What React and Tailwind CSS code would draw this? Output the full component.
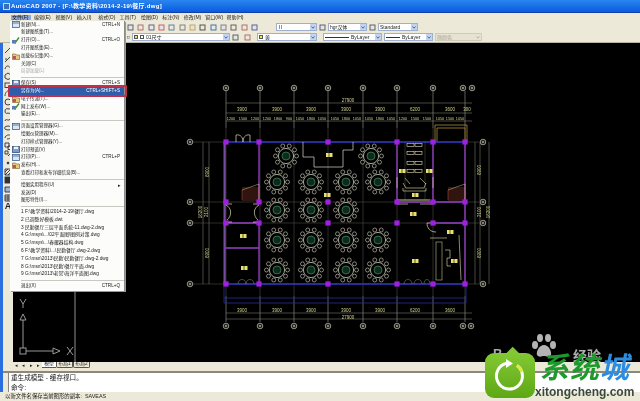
import React from "react";

const font = { fontFamily: '"Liberation Sans", "Noto Sans CJK SC", sans-serif' };

const menuBar = ["编辑(E)", "视图(V)", "插入(I)", "格式(O)", "工具(T)", "绘图(D)", "标注(N)", "修改(M)", "窗口(W)", "帮助(H)"];

const menu = [
  { t: "新建(N)...", k: "CTRL+N", i: "new" },
  { t: "新建图纸集(T)..." },
  { t: "打开(O)...", k: "CTRL+O", i: "open" },
  { t: "打开图纸集(E)..." },
  { t: "加载标记集(K)...", i: "mark" },
  { t: "关闭(C)" },
  { t: "局部加载(L)", off: true },
  { sep: true },
  { t: "保存(S)", k: "CTRL+S", i: "save" },
  { t: "另存为(A)...", k: "CTRL+SHIFT+S", on: true },
  { t: "电子传递(T)...", i: "mark" },
  { t: "网上发布(W)...", i: "open" },
  { t: "输出(E)..." },
  { sep: true },
  { t: "页面设置管理器(G)...", i: "new" },
  { t: "绘图仪管理器(M)..." },
  { t: "打印样式管理器(Y)..." },
  { t: "打印预览(V)", i: "save" },
  { t: "打印(P)...", k: "CTRL+P", i: "new" },
  { t: "发布(H)...", i: "mark" },
  { t: "查看打印和发布详细信息(B)..." },
  { sep: true },
  { t: "绘图实用程序(U)", arrow: true },
  { t: "发送(D)" },
  { t: "图形特性(I)..." },
  { sep: true },
  { t: "1 F:\\教学资料\\2014-2-19\\餐厅.dwg", f: true },
  { t: "2 已调整好模板.dwt", f: true },
  { t: "3 民勤餐厅三层平面系统-11.dwg-2.dwg", f: true },
  { t: "4 G:\\msys\\...\\02平面图\\图例对策.dwg", f: true },
  { t: "5 G:\\msys\\...\\春耀器结构.dwg", f: true },
  { t: "6 F:\\教学资料\\...\\民勤餐厅.dwg-2.dwg", f: true },
  { t: "7 G:\\msn\\2013\\民勤\\民勤餐厅.dwg-2.dwg", f: true },
  { t: "8 G:\\msn\\2013\\民勤\\餐厅平面.dwg", f: true },
  { t: "9 G:\\msn\\2013\\老常\\海洋平面图.dwg", f: true },
  { sep: true },
  { t: "退出(X)", k: "CTRL+Q" },
];

function MenuIcon({ type }) {
  if (type === "new")
    return (
      <svg width="8" height="7" viewBox="0 0 8 7">
        <rect x="0.5" y="0.5" width="7" height="6" fill="#dbe6f4" stroke="#41618f" strokeWidth="0.8" />
        <path d="M0.5 2H7.5" stroke="#41618f" strokeWidth="0.8" />
      </svg>
    );
  if (type === "open")
    return (
      <svg width="8" height="7" viewBox="0 0 8 7">
        <path d="M1 3L3 6L7 0.5" fill="none" stroke="#3c8a2e" strokeWidth="1.3" />
        <rect x="0" y="3" width="4" height="3.5" fill="#5a7fb0" />
      </svg>
    );
  if (type === "mark")
    return (
      <svg width="8" height="7" viewBox="0 0 8 7">
        <path d="M0.5 1H3.5L4.5 2H7.5V6.5H0.5Z" fill="#e8c87a" stroke="#8a6a3a" strokeWidth="0.7" />
        <rect x="1" y="3" width="3" height="3" fill="#c0506a" />
      </svg>
    );
  return (
    <svg width="8" height="7" viewBox="0 0 8 7">
      <rect x="0.5" y="0.5" width="7" height="6" fill="#7f9cc6" stroke="#37527c" strokeWidth="0.8" />
      <rect x="2" y="0.7" width="4" height="2.3" fill="#eef2f8" />
    </svg>
  );
}

const tools = [
  <path d="M1 7L7 1" />,
  <path d="M1 7L7 1M1 4H3" />,
  <path d="M1 6C2 2 5 2 7 6" />,
  <path d="M4 1L7 3V6L4 7.5L1 6V3Z" />,
  <rect x="1" y="2" width="6" height="4.5" />,
  <path d="M1 7C1 3 4 1 7 1" />,
  <circle cx="4" cy="4" r="3" />,
  <path d="M1 4C1 2 3 1 4 2C6 1 7 3 7 4C7 6 5 7 4 6C2 7 1 6 1 4Z" />,
  <path d="M1 5C2 1 4 7 7 2" />,
  <ellipse cx="4" cy="4" rx="3.4" ry="2" />,
  <path d="M1 5C1 2 6 1 7 3C7 5 5 6 3 6" />,
  <path d="M1 1H5V5H1ZM4 4H7.5V7.5H4Z" />,
  <path d="M1 1H4V4H1ZM4 6L7 3M7 3V6" />,
  <circle cx="4" cy="4" r="0.9" fill="#222" />,
  <path d="M1 1H7V7H1ZM1 4L4 1M1 7L7 1M4 7L7 4" />,
  <rect x="1" y="1" width="6" height="6" fill="#333" />,
  <path d="M1 2H7V7H1Z" fill="#9db4d2" />,
  <path d="M1 1H7V7H1ZM1 3H7M1 5H7M4 1V7" />,
];

function Combo({ w, children, gray }) {
  return (
    <div className={`flex h-[8px] items-center border ${gray ? "border-[#cfccbc] bg-[#e6e3d3] text-[#aaa79a]" : "border-[#9fb0cc] bg-white text-[#222]"}`} style={{ width: w }}>
      <div className="flex min-w-0 flex-1 items-center gap-[2px] overflow-hidden whitespace-nowrap pl-[1px] text-[5px] leading-none">{children}</div>
      <div className={`flex h-full w-[6px] items-center justify-center ${gray ? "bg-[#e6e3d3]" : "bg-[#c3d3f0]"}`}>
        <svg width="4" height="3" viewBox="0 0 4 3">
          <path d="M0.5 0.5L2 2.2L3.5 0.5" fill="none" stroke={gray ? "#aaa" : "#3a5a94"} strokeWidth="0.9" />
        </svg>
      </div>
    </div>
  );
}

const tbColors = ["#555", "#a66", "#558", "#c55", "#579", "#777", "#c8a03c", "#444", "#36a", "#777"];

function ToolIcons({ n, w }) {
  return (
    <div className="flex items-center justify-between" style={{ width: w }}>
      {Array.from({ length: n }).map((_, i) => (
        <svg key={i} width="7" height="7" viewBox="0 0 7 7">
          <rect x="1" y="1" width="5" height="5" fill={i % 3 === 0 ? "#dfe4ee" : "none"} stroke={tbColors[i % tbColors.length]} strokeWidth="0.9" />
        </svg>
      ))}
    </div>
  );
}

const colX = [226, 259, 328, 397, 433, 465];
const gridX = [226, 260, 294, 328, 363, 397, 433, 465];
const gridY = [142, 202, 223, 284];
const tables = [
  [286, 156], [371, 156],
  [277, 182], [311, 182], [346, 182], [378, 182],
  [277, 210], [311, 210], [346, 210],
  [277, 240], [311, 240], [346, 240], [378, 240],
  [277, 270], [311, 270], [346, 270], [378, 270],
];
const labels = [[329, 155], [327, 195], [402, 171], [429, 171], [415, 195], [243, 236], [244, 268], [413, 214], [450, 232], [415, 261], [454, 261]];
const topA = [[242, "3900"], [277, "3900"], [311, "3900"], [346, "3900"], [380, "3900"], [415, "6200"], [450, "3600"], [467, "300"]];
const topB = [[231, "1200"], [243, "1500"], [255, "1200"], [267, "1200"], [278, "1800"], [289, "900"], [300, "1050"], [311, "1800"], [322, "1050"], [335, "1050"], [346, "1800"], [357, "1050"], [369, "1050"], [380, "1800"], [391, "1050"], [403, "1200"], [415, "1500"], [427, "1500"], [440, "1050"], [450, "1500"], [460, "1050"]];
const stalls = [145, 153, 163, 171];

function Table({ x, y }) {
  const chairs = Array.from({ length: 10 }).map((_, i) => {
    const a = (i * Math.PI * 2) / 10;
    return [x + Math.cos(a) * 10.5, y + Math.sin(a) * 10.5];
  });
  return (
    <g>
      {chairs.map(([cx, cy], i) => (
        <circle key={i} cx={cx} cy={cy} r="2" fill="#000" stroke="#d8d8c4" strokeWidth="0.6" />
      ))}
      <circle cx={x} cy={y} r="7.6" fill="#000" stroke="#e6e6d2" strokeWidth="0.7" />
      <circle cx={x} cy={y} r="4" fill="#0d2a1c" stroke="#3f8f5f" strokeWidth="0.7" />
    </g>
  );
}

function Bubble({ x, y }) {
  return (
    <g>
      <circle cx={x} cy={y} r="2.8" fill="#222" stroke="#b4b4a0" strokeWidth="0.8" />
      <circle cx={x} cy={y} r="0.9" fill="#b4b4a0" />
    </g>
  );
}

function Stair({ x }) {
  return (
    <g stroke="#c0503c" strokeWidth="0.5" fill="none">
      {[188, 190, 192, 194, 196, 198, 200].map((y) => (
        <path key={y} d={`M${x} ${y}H${x + 17}`} />
      ))}
      <path d={`M${x} 190L${x + 17} 184V200`} stroke="#d8c090" />
      <path d={`M${x} 190V200`} />
    </g>
  );
}

function Plan() {
  return (
    <svg className="absolute inset-0 block h-full w-full" viewBox="13 43 627 319">
      {/* axes */}
      {gridX.map((x) => (
        <g key={x}>
          <path d={`M${x} 91V128`} stroke="#a0a094" strokeWidth="0.6" />
          <path d={`M${x} 128V296`} stroke="#4c4c46" strokeWidth="0.6" />
          <path d={`M${x} 296V322`} stroke="#a0a094" strokeWidth="0.6" />
        </g>
      ))}
      {gridY.map((y) => (
        <path key={y} d={`M193 ${y}H479`} stroke="#4c4c46" strokeWidth="0.6" />
      ))}
      {[226, 260, 294, 328, 363, 397, 433, 463, 472].map((x) => (
        <Bubble key={x} x={x} y={88} />
      ))}
      {[226, 260, 294, 328, 363, 397, 433, 463, 471].map((x) => (
        <Bubble key={x} x={x} y={326} />
      ))}
      {gridY.map((y) => (
        <g key={y}>
          <Bubble x={190} y={y} />
          <Bubble x={483} y={y} />
        </g>
      ))}

      {/* dimensions */}
      <g stroke="#8c8c80" strokeWidth="0.5" fill="none">
        <path d="M226 103H472M226 113H472M226 121H472M226 313H472M226 319H472" />
        <path d="M203 142V284M209 142V284M475 142V284M480 142V284M489 142V284" />
      </g>
      <g fill="#cfcf88" fontSize="4.5" textAnchor="middle" style={{ fontFamily: '"Liberation Sans", sans-serif' }}>
        <text x="348" y="102">27900</text>
        <text x="348" y="319">27900</text>
        {topA.map(([x, t], i) => (
          <text key={i} x={x} y="111">{t}</text>
        ))}
        {topB.map(([x, t], i) => (
          <text key={i} x={x} y="119.5" fontSize="3.8">{t}</text>
        ))}
        {topA.slice(0, 7).map(([x, t], i) => (
          <text key={i} x={x} y="311.5">{t}</text>
        ))}
        <text transform="translate(209 172) rotate(-90)">6900</text>
        <text transform="translate(209 253) rotate(-90)">6900</text>
        <text transform="translate(208 212) rotate(-90)">2100</text>
        <text transform="translate(202 212) rotate(-90)">16200</text>
        <text transform="translate(481 170) rotate(-90)">6900</text>
        <text transform="translate(481 253) rotate(-90)">6900</text>
        <text transform="translate(481 212) rotate(-90)">2100</text>
        <text transform="translate(490 212) rotate(-90)">16200</text>
      </g>

      {/* elevator */}
      <path d="M435 142V125H467V142M437 142V128H465V142" fill="none" stroke="#a88c3c" strokeWidth="0.8" />

      {/* walls */}
      <g fill="none" stroke="#2f34c8" strokeWidth="1.6">
        <path d="M226 142H465M226 284H465" />
      </g>
      <g fill="none" stroke="#2a2e9c" strokeWidth="0.8">
        <path d="M224 298H466M224 303H466M224 284V303M466 284V303" />
      </g>
      <g fill="none" stroke="#9640c8" strokeWidth="1.3">
        <path d="M225 142V284M259 142V202M259 223V284M226 223H259M226 248H259" />
        <path d="M397 142V202M433 142V202M465 142V284M433 223H465M397 202H465" />
      </g>
      <path d="M224 142V284" stroke="#a8a0e0" strokeWidth="0.6" />

      {/* room outline */}
      <path d="M303 142V157H314V167H343V158V150H353V142" fill="none" stroke="#d8d8d0" strokeWidth="0.7" />
      <path d="M405 142V200M425 142V200" stroke="#6a6a60" strokeWidth="0.4" />

      {tables.map(([x, y]) => (
        <Table key={`${x}-${y}`} x={x} y={y} />
      ))}

      {/* doors */}
      <g fill="none" stroke="#e2dcb8" strokeWidth="0.7">
        <path d="M236 142V135C241 134 243 138 243 142M250 142V135C245 134 243 138 243 142" />
        <path d="M225 204H232M225 222H232M253 204H259M253 222H259" />
        <path d="M226 205C232 208 232 216 227 220M259 205C253 208 253 216 258 220" />
        <path d="M397 204H408M420 204H433" />
        <path d="M433 223H427C427 228 430 232 436 232" />
      </g>
      <g fill="none" stroke="#8a8a80" strokeWidth="0.5">
        <path d="M238 284C238 278 246 278 246 284M246 284C246 278 254 278 254 284M404 284C404 278 412 278 412 284M414 284C414 278 422 278 422 284M424 284C424 278 430 278 430 284" />
      </g>

      <Stair x={242} />
      <Stair x={448} />

      {/* washroom */}
      <g fill="#000" stroke="#e6e0b0" strokeWidth="0.6">
        {stalls.map((y) => (
          <g key={y}>
            <rect x="407" y={y - 1.5} width="7" height="3" />
            <rect x="415" y={y - 1.5} width="7" height="3" />
          </g>
        ))}
        <path d="M403 183L406 188H424L426 183M403 188V191H426V188" fill="none" />
        <path d="M397 177V188M433 177V188M405 178L410 184M420 178L426 184" fill="none" />
        <path d="M397 200H430" fill="none" strokeWidth="0.9" />
        <rect x="436" y="242" width="6" height="38" fill="none" stroke="#c0c090" />
        <path d="M445 250H450V258H447V266H451M430 238H447M459 235L461 280" fill="none" />
      </g>

      {/* room labels */}
      {labels.map(([x, y]) => (
        <g key={`${x}-${y}`}>
          <rect x={x - 3} y={y - 2} width="6.5" height="4" fill="#e8e070" />
          <path d={`M${x} ${y - 2}V${y + 2}`} stroke="#000" strokeWidth="0.6" />
        </g>
      ))}

      {/* columns */}
      {gridY.flatMap((y) =>
        colX.map((x) => <rect key={`${x}-${y}`} x={x - 2.6} y={y - 2.6} width="5.2" height="5.2" fill="#a020e0" />)
      )}

      {/* ucs icon and cursor */}
      <path d="M75 43V362" stroke="#777" strokeWidth="1.2" />
      <g fill="none" stroke="#a8a8a8" strokeWidth="0.9">
        <path d="M20 299L23 304L26 299M23 304V308" />
        <path d="M23 314L20 320H26ZM23 320V348" />
        <rect x="20" y="348" width="6" height="6" />
        <path d="M26 351H53M53 348V354L60 351Z" />
        <path d="M67 347L73 355M73 347L67 355" />
      </g>
    </svg>
  );
}

function Watermark() {
  return (
    <div className="absolute inset-0 overflow-hidden">
      {/* baidu */}
      <span className="absolute left-[493px] top-[347px] text-[13px] font-bold leading-none text-[#a9a9a9]">B</span>
      <svg className="absolute left-[530px] top-[333px]" width="28" height="28" viewBox="0 0 28 28" fill="#b4b4b4">
        <ellipse cx="5" cy="12" rx="3" ry="4" />
        <ellipse cx="10" cy="5" rx="3" ry="4" />
        <ellipse cx="18" cy="5" rx="3" ry="4" />
        <ellipse cx="23" cy="12" rx="3" ry="4" />
        <path d="M14 12C9 12 6 19 7 22C9 25 12 23 14 23C16 23 19 25 21 22C22 19 19 12 14 12Z" />
      </svg>
      <span className="absolute left-[573px] top-[349px] text-[14px] font-bold leading-none text-[#b0b0b0]">经验</span>

      {/* green logo */}
      <div className="absolute left-[508px] top-[349px] h-[9px] w-[10px] rotate-45 bg-[#82c832]" />
      <div className="absolute left-[485px] top-[353px] flex h-[45px] w-[50px] items-center justify-center rounded-[9px] bg-gradient-to-b from-[#82c832] to-[#5ea814]">
        <svg width="34" height="34" viewBox="0 0 34 34" fill="none">
          <path d="M24 6.5A13 13 0 1 1 14 4.3" stroke="#fff" strokeWidth="3" />
          <path d="M13 0L20 4.5L13 9Z" fill="#fff" />
          <path d="M24 6.5A13 13 0 0 1 29 13" stroke="#d7ee3c" strokeWidth="3" />
        </svg>
      </div>

      {/* site name */}
      <div className="absolute left-[542px] top-[354px] flex -skew-x-12 text-[29px] font-bold leading-none tracking-[1px] text-[#1c9a2c]">
        <span>系统</span>
        <span className="text-[#2c8ce0]">城</span>
      </div>
      <span className="absolute left-[535px] top-[386px] whitespace-nowrap text-[12px] font-bold leading-none text-[#3a4a3a]">xitongcheng.com</span>
    </div>
  );
}

function FileMenu() {
  return (
    <div className="absolute left-[10px] top-[21px] flex w-[115px] flex-col border-r border-[#8c8c8c] bg-[#fcfcfa] shadow-[1px_1px_0_#999]">
      {menu.map((m, i) =>
        m.sep ? (
          <div key={i} className="flex h-[4px] items-center pl-[11px]">
            <div className="h-px w-full bg-[#c8c8c0]" />
          </div>
        ) : (
          <div key={i} className={`flex h-[7.8px] items-center whitespace-nowrap leading-none ${m.f ? "text-[4.8px]" : "text-[4.5px]"} ${m.on ? "bg-[#2f5dab] text-white" : m.off ? "text-[#aaa]" : "text-[#222]"}`}>
            <div className="flex w-[11px] justify-center">{m.i && <MenuIcon type={m.i} />}</div>
            <span className="flex-1">{m.t}</span>
            {m.k && <span className="pr-[4px] text-[4.6px]">{m.k}</span>}
            {m.arrow && <span className="pr-[3px] text-[5px]">▸</span>}
          </div>
        )
      )}
      {/* red marker round the selected row */}
      <div className="absolute left-[-2px] top-[64px] h-[12px] w-[119px] rounded-[1px] border-2 border-[#c0304a]" />
    </div>
  );
}

export default function App() {
  return (
    <div className="relative flex h-[401px] w-[640px] flex-col overflow-hidden bg-[#ece9d8] blur-[0.3px]" style={font}>
      {/* title */}
      <div className="flex h-[13px] items-center gap-[1px] border-b border-[#0f3fa8] bg-gradient-to-b from-[#2a86f0] to-[#0a5ae0] pl-[3px] text-[6px] font-bold tracking-[0.3px] text-white">
        <div className="h-[7px] w-[7px] border border-[#c8d8f0] bg-[#3a70b0]" />
        <span>AutoCAD 2007 - [F:\教学资料\2014-2-19\餐厅.dwg]</span>
      </div>

      {/* menu bar */}
      <div className="flex h-[8px] items-center bg-[#ece9d8] pl-[11px] text-[5px] leading-none text-[#222]">
        <span className="mr-[3px] w-[20px] bg-[#8fa9d6] px-[1px] text-[#111]">文件(F)</span>
        <div className="flex gap-[4.6px]">
          {menuBar.map((m) => (
            <span key={m} className="w-[16.8px] whitespace-nowrap">{m}</span>
          ))}
        </div>
      </div>

      {/* toolbars */}
      <div className="flex h-[22px] flex-col gap-[2px] border-b border-[#b8b5a4] bg-[#ece9d8] pl-[127px] pt-[2px]">
        <div className="flex items-center gap-[2px]">
          <ToolIcons n={13} w={131} />
          <div className="w-[14px]" />
          <Combo w={41}>Ⅱ</Combo>
          <div className="w-[7px]"><ToolIcons n={1} w={7} /></div>
          <Combo w={39}>hgr汉体</Combo>
          <div className="w-[7px]"><ToolIcons n={1} w={7} /></div>
          <Combo w={40}>Standard</Combo>
        </div>
        <div className="flex items-center gap-[2px]">
          <ToolIcons n={1} w={3} />
          <Combo w={98}>
            <span className="h-[4px] w-[4px] border border-[#555] bg-[#f0e060]" />
            <span className="h-[4px] w-[4px] border border-[#555] bg-[#fff]" />
            01尺寸
          </Combo>
          <ToolIcons n={2} w={19} />
          <div className="w-[2px]" />
          <Combo w={60}>
            <span className="h-[4px] w-[4px] border border-[#555] bg-[#f0f040]" />
            黄
          </Combo>
          <div className="w-[2px]" />
          <Combo w={59}>
            <span className="h-px w-[24px] bg-[#333]" />
            ByLayer
          </Combo>
          <Combo w={49}>
            <span className="h-px w-[14px] bg-[#333]" />
            ByLayer
          </Combo>
          <Combo w={47} gray>随颜色</Combo>
        </div>
      </div>

      {/* body */}
      <div className="flex min-h-0 flex-1 bg-[#ece9d8]">
        <div className="w-[3px] bg-[#2a6fe0]" />
        <div className="flex min-w-0 flex-1 flex-col">
          <div className="flex h-[328px]">
            <div className="flex w-[10px] flex-col items-center gap-[0.7px] pt-[3px]">
              {tools.map((t, i) => (
                <svg key={i} width="8" height="8" viewBox="0 0 8 8" fill="none" stroke="#2e2e38" strokeWidth="0.9">{t}</svg>
              ))}
              <span className="text-[9px] font-bold leading-[9px] text-[#223]">A</span>
            </div>
            <div className="flex min-w-0 flex-1 flex-col">
              <div className="relative h-[319px] bg-black">
                <Plan />
              </div>
              <div className="flex h-[9px] items-start text-[4.8px] leading-none text-[#222]">
                <div className="flex h-[6px] w-[29px] items-center justify-between px-[2px]">
                  {["◂", "◂", "▸", "▸"].map((a, i) => (
                    <span key={i} className="text-[5px]">{a}</span>
                  ))}
                </div>
                <div className="flex h-[6px] w-[14px] items-center justify-center border-b border-[#555] bg-white">模型</div>
                <div className="flex h-[6px] w-[17px] items-center justify-center rounded-b-[2px] border-x border-b border-[#555]">布局1</div>
                <div className="flex h-[6px] w-[17px] items-center justify-center rounded-b-[2px] border-x border-b border-[#555]">布局2</div>
              </div>
            </div>
          </div>
          <div className="h-[2px] border-y border-[#8a887c] bg-[#ece9d8]" />
          <div className="flex h-[19px]">
            <div className="w-[5px]" />
            <div className="flex flex-1 flex-col justify-center gap-[3px] border-l border-[#8a887c] bg-white pl-[2px] text-[6.6px] leading-[7px] text-[#222]">
              <span>重生成模型 - 缓存视口。</span>
              <span>命令:</span>
            </div>
          </div>
        </div>
      </div>

      {/* status */}
      <div className="flex h-[9px] items-center bg-[#ece9d8] pl-[5px] text-[5.4px] leading-none text-[#222]">
        以新文件名保存当前图形的副本: &nbsp;SAVEAS
      </div>

      <FileMenu />
      <Watermark />
    </div>
  );
}
